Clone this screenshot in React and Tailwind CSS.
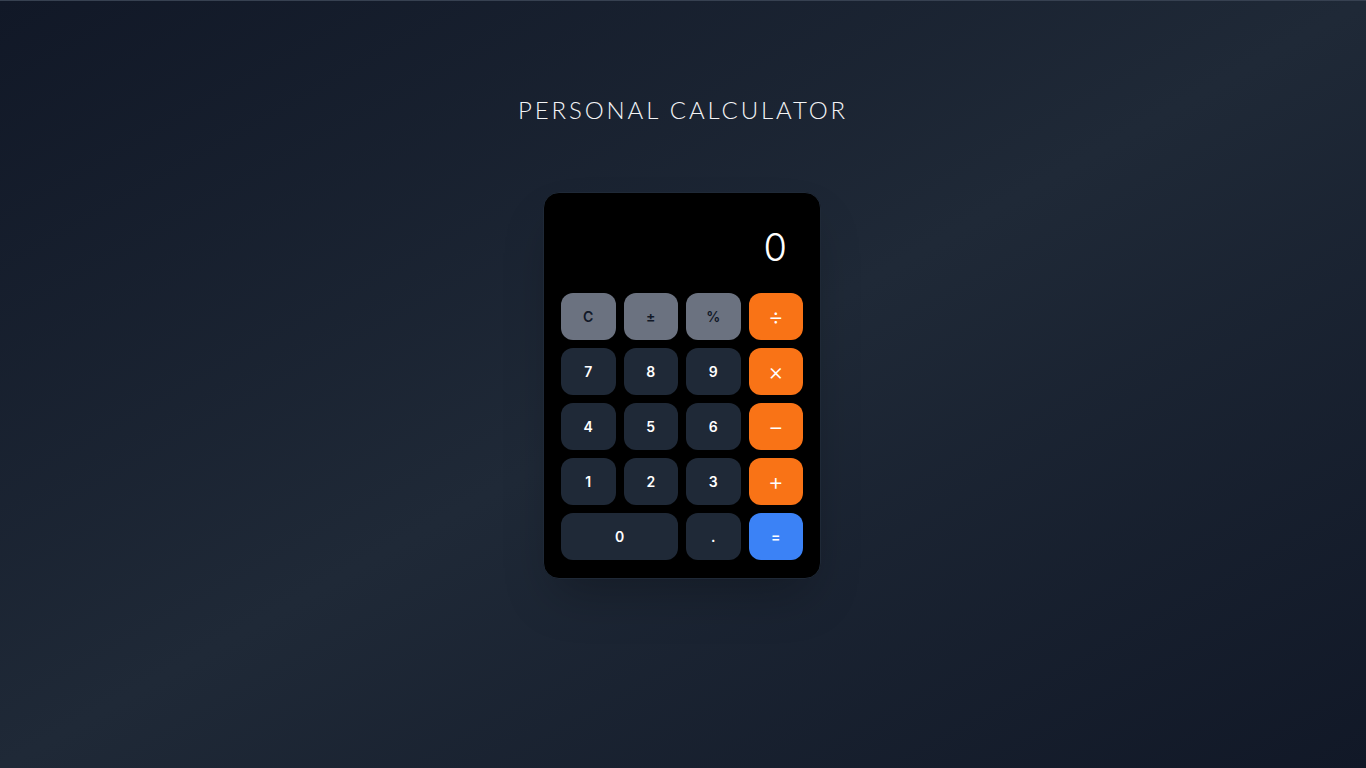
import React, { useState } from 'react';

const keys = [
  { label: 'C', kind: 'fn' },
  { label: '±', kind: 'fn' },
  { label: '%', kind: 'fn' },
  { label: '÷', kind: 'op' },
  { label: '7', kind: 'num' },
  { label: '8', kind: 'num' },
  { label: '9', kind: 'num' },
  { label: '×', kind: 'op' },
  { label: '4', kind: 'num' },
  { label: '5', kind: 'num' },
  { label: '6', kind: 'num' },
  { label: '−', kind: 'op' },
  { label: '1', kind: 'num' },
  { label: '2', kind: 'num' },
  { label: '3', kind: 'num' },
  { label: '+', kind: 'op' },
  { label: '0', kind: 'num', wide: true },
  { label: '.', kind: 'num' },
  { label: '=', kind: 'eq' },
];

const styles = {
  fn: 'bg-[#6b7280] text-[#111827] text-sm font-semibold',
  num: 'bg-[#1f2937] text-white text-sm font-semibold',
  op: 'bg-[#f97316] text-white text-2xl font-light',
  eq: 'bg-[#3b82f6] text-white text-sm font-semibold',
};

export default function App() {
  const [display, setDisplay] = useState('0');

  function press(k) {
    if (k.kind === 'num') {
      setDisplay(d => (d === '0' && k.label !== '.' ? k.label : d + k.label));
    } else if (k.label === 'C') {
      setDisplay('0');
    }
  }

  return (
    <div className="min-h-screen flex flex-col items-center border-t border-[#374151] bg-gradient-to-br from-[#111827] via-[#1f2937] to-[#111827] font-['Inter',sans-serif]">
      {/* Title */}
      <h1 className="pt-[93px] text-[24px] leading-8 font-light tracking-[0.12em] text-gray-100 font-['Lato',sans-serif]">
        PERSONAL CALCULATOR
      </h1>

      {/* Calculator */}
      <div className="mt-[66px] mr-[2px] w-[278px] bg-black rounded-2xl border border-[#1f2937] p-[17px] pb-[18px] shadow-2xl">
        <div className="h-[75px] mb-2 flex items-center justify-end pr-[16px] text-white text-[38px] font-light">
          {display}
        </div>
        <div className="grid grid-cols-4 gap-2">
          {keys.map(k => (
            <button
              key={k.label}
              onClick={() => press(k)}
              className={`h-[47px] rounded-xl flex items-center justify-center ${styles[k.kind]} ${k.wide ? 'col-span-2' : ''}`}
            >
              {k.label}
            </button>
          ))}
        </div>
      </div>
    </div>
  );
}
